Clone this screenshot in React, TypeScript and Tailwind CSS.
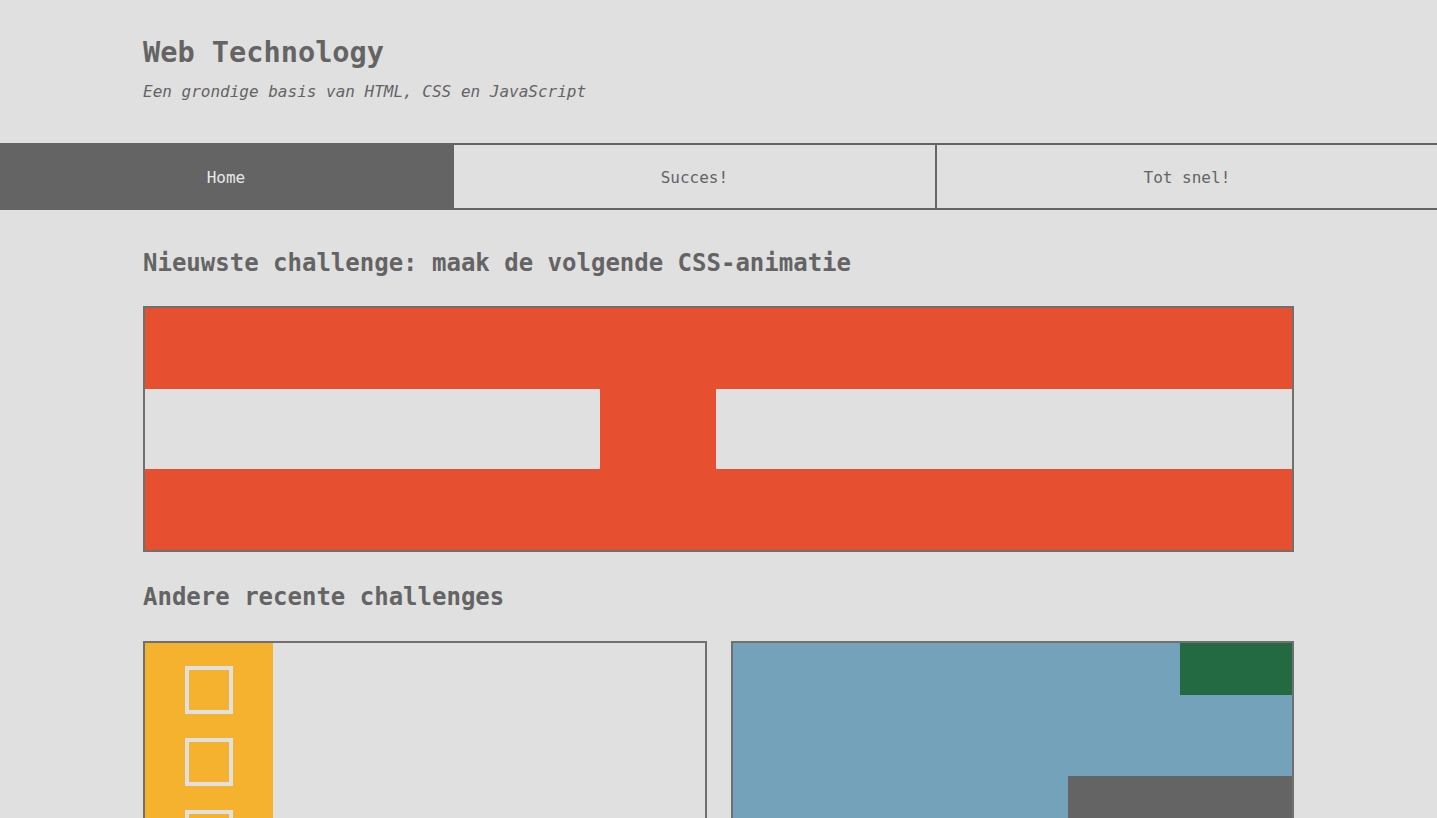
const tabs = [
  { label: "Home", active: true },
  { label: "Succes!", active: false },
  { label: "Tot snel!", active: false },
];

export default function App() {
  return (
    <div
      className="min-h-screen bg-[#e0e0e0] text-[#646464]"
      style={{ fontFamily: '"DejaVu Sans Mono", "Liberation Mono", monospace' }}
    >
      {/* header */}
      <header className="px-[143px] pt-[34px] pb-[40px]">
        <h1 className="text-[28.6px] leading-[36px] font-bold">Web Technology</h1>
        <p className="mt-[10px] text-[16px] leading-[23px] italic">
          Een grondige basis van HTML, CSS en JavaScript
        </p>
      </header>

      {/* nav */}
      <nav className="flex h-[67px] border-y-2 border-[#646464]">
        {tabs.map((tab, i) => (
          <a
            key={tab.label}
            href="#"
            className={
              "flex flex-auto items-center justify-center pt-[2px] text-[16px] " +
              (tab.active ? "bg-[#646464] text-[#e8e8e8] " : "") +
              (i < tabs.length - 1 ? "border-r-2 border-[#646464]" : "")
            }
          >
            {tab.label}
          </a>
        ))}
      </nav>

      <main className="px-[143px] pt-[37px]">
        <h2 className="text-[24px] leading-[32px] font-bold">
          Nieuwste challenge: maak de volgende CSS-animatie
        </h2>

        <div className="mt-[27px] border-2 border-[#707070] flex flex-col h-[246px]">
          <div className="flex-1 bg-[#e64f30]" />
          <div className="flex flex-1">
            <div className="w-[455px] bg-[#e0e0e0]" />
            <div className="w-[116px] bg-[#e64f30]" />
            <div className="flex-1 bg-[#e0e0e0]" />
          </div>
          <div className="flex-1 bg-[#e64f30]" />
        </div>

        <h2 className="mt-[29px] text-[24px] leading-[32px] font-bold">
          Andere recente challenges
        </h2>

        <div className="mt-[28px] grid grid-cols-2 gap-6 pb-10">
          <div className="h-[320px] border-2 border-[#707070] flex">
            <div className="w-[128px] bg-[#f4b22f] flex flex-col items-center gap-6 pt-[23px]">
              <div className="w-12 h-12 border-4 border-[#e0e0e0]" />
              <div className="w-12 h-12 border-4 border-[#e0e0e0]" />
              <div className="w-12 h-12 border-4 border-[#e0e0e0]" />
            </div>
            <div className="flex-1" />
          </div>

          <div className="h-[320px] border-2 border-[#707070] bg-[#73a2ba] flex flex-col">
            <div className="flex justify-end">
              <div className="w-[112px] h-[52px] bg-[#236a43]" />
            </div>
            <div className="flex justify-end mt-[81px]">
              <div className="w-[224px] h-[120px] bg-[#646464]" />
            </div>
          </div>
        </div>
      </main>
    </div>
  );
}
